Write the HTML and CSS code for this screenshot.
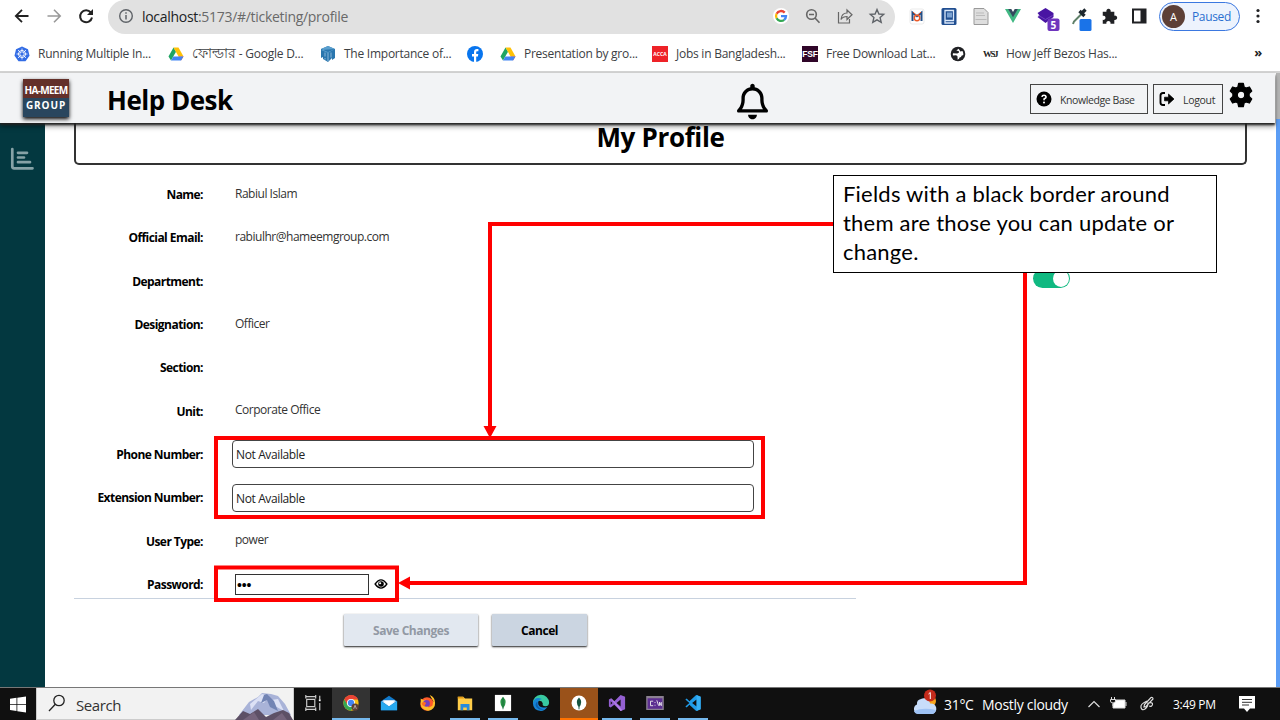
FILE: index.html
```html
<!DOCTYPE html>
<html lang="en">
<head>
<meta charset="utf-8">
<title>Help Desk - My Profile</title>
<link rel="stylesheet" href="styles.css">
</head>
<body>
<svg width="0" height="0" class="defs">
  <defs>
    <symbol id="drive" viewBox="0 0 16 16"><path fill="#1fa463" d="M5.5 1.5 0.5 10.5 3 14.5 8 5.7z"/><path fill="#ffc107" d="M5.500 1.500h5l5 9h-5z"/><path fill="#ea4335" d="M13 14.500l2.500-4h-5z"/><path fill="#4285f4" d="M3 14.500 5.400 10.500h10.100L13 14.500z"/></symbol>
  </defs>
</svg>

<div class="toolbar">
  <svg class="nav" viewBox="0 0 32 32"><path d="M22.500 16H10M16 9.800 9.800 16l6.200 6.200" fill="none" stroke="#222" stroke-width="1.800"/></svg>
  <svg class="nav" viewBox="0 0 32 32"><path d="M9.500 16H22M16 9.800 22.200 16 16 22.200" fill="none" stroke="#999" stroke-width="1.600"/></svg>
  <svg class="nav" viewBox="0 0 32 32"><path d="M20.800 12.500A6 6 0 1 0 22 17.500" fill="none" stroke="#222" stroke-width="2"/><path d="M23 9v6h-6z" fill="#222"/></svg>
  <div class="address">
    <svg width="16" height="16" viewBox="0 0 16 16"><circle cx="8" cy="8" r="6.300" fill="none" stroke="#5f6368" stroke-width="1.400"/><path d="M8 7v4.500M8 4.300v1.500" stroke="#5f6368" stroke-width="1.500"/></svg>
    <div class="url"><b>localhost</b>:5173/#/ticketing/profile</div>
    <div class="address-icons">
      <svg class="slot" viewBox="0 0 32 32"><circle cx="16" cy="16" r="8" fill="#fff"/><g fill="none" stroke-width="2.300"><path d="M19.700 12.600A5 5 0 0 0 11.600 13.700" stroke="#ea4335"/><path d="M11.600 13.700A5 5 0 0 0 11.600 18.300" stroke="#fbbc05"/><path d="M11.600 18.300A5 5 0 0 0 19.200 19.800" stroke="#34a853"/><path d="M19.200 19.800A5 5 0 0 0 21 16.100H16" stroke="#4285f4"/></g></svg>
      <svg class="slot" viewBox="0 0 32 32" fill="none" stroke="#666" stroke-width="1.600"><circle cx="14.500" cy="14.500" r="4.800"/><path d="M18 18l4.500 4.800M12 14.500h5"/></svg>
      <svg class="slot" viewBox="0 0 32 32" fill="none" stroke="#666" stroke-width="1.200"><path d="M9.500 12v11h11v-4"/><path d="M12 19.500c.5-5 3-6.500 6-6.500v-3l5 4.800-5 4.700v-3c-3 0-4.500.5-6 3z"/></svg>
      <svg class="slot" viewBox="0 0 32 32" fill="none" stroke="#5f6368" stroke-width="1.400"><path d="M16 9.500l1.900 4.500 4.800.4-3.600 3.200 1.100 4.700-4.200-2.500-4.200 2.500 1.100-4.700-3.600-3.200 4.800-.4z"/></svg>
    </div>
  </div>
  <div class="extensions">
    <svg class="slot" viewBox="0 0 32 32"><rect x="9" y="9" width="14" height="15" rx="2" fill="#fff" stroke="#ddd" stroke-width=".6"/><path d="M11.500 21v-8.500l4.500 3.700 4.500-3.700V21" fill="none" stroke="#244f86" stroke-width="2"/><circle cx="16" cy="18" r="2.700" fill="none" stroke="#eb5b2a" stroke-width="1.400"/><path d="M12 12l4 4 4-4" fill="none" stroke="#eb5b2a"/></svg>
    <svg class="slot" viewBox="0 0 32 32"><rect x="8.500" y="8" width="15" height="17" rx="1.500" fill="#204e90"/><path d="M12 10.500h8.500v10H12zM12 10v13h9" fill="none" stroke="#dce9fa" stroke-width="1.300"/><rect x="14" y="12.500" width="5" height="5" fill="#7ba2d2"/></svg>
    <svg class="slot" viewBox="0 0 32 32"><path d="M9 8.500h10l4 4v12H9z" fill="#dedede" stroke="#999"/><path d="M11 13h8M11 15.500h9M10.500 19.500h11" stroke="#bbb"/></svg>
    <svg class="slot" viewBox="0 0 32 32"><path d="M8 9h4l4 7 4-7h4l-8 14z" fill="#41b883"/><path d="M11.200 9h3.100l1.700 3 1.700-3h3.100L16 17.300z" fill="#35495e"/></svg>
    <svg class="slot blazor" viewBox="0 0 34 32"><path d="M16 8l8 5v4l-8 6-8-6 2-1.500L8 13z" fill="#4915a3"/><path d="M9 15.500l7 4 7-4" fill="none" stroke="#8a65cf" stroke-width=".6"/><rect x="18" y="18.500" width="12" height="12.500" rx="2" fill="#6f35be"/><text x="21" y="28.500" font-size="10" font-weight="700" fill="#fff">5</text></svg>
    <svg class="slot" viewBox="0 0 32 32"><path d="M18.500 13 10 21.500 9 24" fill="none" stroke="#5f8068" stroke-width="2"/><path d="M15.500 11l5 5M18 13l3.500-3.500" stroke="#1e2830" stroke-width="3.300"/><rect x="15.500" y="19" width="12" height="12" rx="1.500" fill="#1a73e8"/></svg>
    <svg class="slot puzzle" viewBox="0 0 28 32"><path d="M7 11.500h3.800a2.300 2.300 0 1 1 4.400 0H19v4.200a2.300 2.300 0 1 1 0 4.400V24h-4a2.200 2.200 0 1 0-4.200 0H7v-4a2.200 2.200 0 1 0 0-4.200z" fill="#202124"/></svg>
    <svg class="slot" viewBox="0 0 32 32"><rect x="10" y="9.500" width="12.500" height="13" fill="none" stroke="#202124" stroke-width="2"/><rect x="17.500" y="9" width="5.500" height="14" fill="#202124"/></svg>
  </div>
  <div class="account"><span class="avatar">A</span><span class="paused">Paused</span></div>
  <svg class="dots" viewBox="0 0 8 20" fill="#202124"><circle cx="4" cy="4.500" r="1.600"/><circle cx="4" cy="10" r="1.600"/><circle cx="4" cy="15.500" r="1.600"/></svg>
</div>

<div class="bookmarks">
  <div class="bm w154"><svg viewBox="0 0 16 16"><path d="M8 .5l6 2.800 1.500 6.500-4 5.500h-7l-4-5.500L2 3.300z" fill="#326ce5"/><circle cx="8" cy="8" r="3.500" fill="none" stroke="#fff"/><path d="M8 2.500v11M2.500 8h11M4 4l8 8M12 4l-8 8" stroke="#fff" stroke-width=".8"/><circle cx="8" cy="8" r="1.200" fill="#326ce5"/></svg><span>Running Multiple In...</span></div>
  <div class="bm w152"><svg><use href="#drive"/></svg><span><span class="bn">ফোল্ডার</span> - Google D...</span></div>
  <div class="bm w147"><svg viewBox="0 0 16 16"><path d="M8 0l7 3v9l-3 2v-2l-4 4-5-3v-2l-2 1V3z" fill="#2a76ae"/><path d="M1 4l7 3 7-4M1 3l7-3 7 3-7 3z" fill="#5a9fce"/><path d="M8 7v8M5 6.500v4M11 6.500v5M5 12v1.500" stroke="#b4d6ec" stroke-width=".7"/></svg><span>The Importance of...</span></div>
  <div class="bm w33"><svg viewBox="0 0 16 16"><circle cx="8" cy="8" r="8" fill="#0875ee"/><path d="M7 16v-5.500H5V8h2V6.200C7 4 8.200 3 10 3h1.400v2.200h-1C9.400 5.200 9.200 5.700 9.200 6.400V8h2.100l-.4 2.500H9.200V16z" fill="#fff"/></svg></div>
  <div class="bm w152"><svg><use href="#drive"/></svg><span>Presentation by gro...</span></div>
  <div class="bm w150"><b class="acca">ACCA</b><span>Jobs in Bangladesh...</span></div>
  <div class="bm w148"><b class="fsf">FSF</b><span>Free Download Lat...</span></div>
  <div class="bm w32"><svg viewBox="0 0 16 16"><circle cx="8" cy="8" r="7.300" fill="#202124"/><path d="M8.500 2.800Q6.500 4 6.500 5q2-.5 2.500.8T7.200 7.500L3 7.200Q2.600 8.500 3 9.500L6 9.200Q8 9.500 7.600 12v1.800Q9.500 13 9.500 11.500q2 0 2-1.800L13.300 9Q13.600 6.800 12.500 5L10.300 5.500 9.500 4z" fill="#fff"/></svg></div>
  <div class="bm"><b class="wsj">WSJ</b><span>How Jeff Bezos Has...</span></div>
  <span class="more">»</span>
</div>

<div class="page">
  <header class="app-header">
    <div class="logo"><span>HA-MEEM</span><span class="group">GROUP</span></div>
    <h1>Help Desk</h1>
    <svg class="bell" viewBox="0 0 448 512"><path d="M224 0c-17.700 0-32 14.300-32 32V51.200C119 66 64 130.600 64 208v25.400c0 45.400-15.500 89.500-43.800 124.900L5.300 377c-5.800 7.200-6.900 17.100-2.900 25.400S14.800 416 24 416H424c9.200 0 17.600-5.300 21.600-13.600s2.900-18.200-2.900-25.400l-14.900-18.600C399.500 322.900 384 278.800 384 233.400V208c0-77.400-55-142-128-156.800V32c0-17.700-14.300-32-32-32zm0 96c61.900 0 112 50.100 112 112v25.400c0 47.900 13.900 94.600 39.700 134.600H72.300C98.100 328 112 281.300 112 233.400V208c0-61.900 50.100-112 112-112zm64 352H160c0 17 6.700 33.300 18.700 45.300s28.300 18.700 45.300 18.700 33.300-6.700 45.300-18.700S288 465 288 448z"/></svg>
    <div class="actions">
      <div class="hbtn kb"><svg viewBox="0 0 16 16"><circle cx="8" cy="8" r="7.500"/><path d="M5.900 5.900Q6.200 4.300 8 4.300T10.100 6Q10.100 7 8.100 8V9.200" fill="none" stroke="#fff" stroke-width="1.600"/><circle cx="8" cy="11.500" r="1" fill="#fff"/></svg><span>Knowledge Base</span></div>
      <div class="hbtn lo"><svg viewBox="0 0 16 16"><path d="M6 2H4Q1.500 2 1.500 4.500v7Q1.500 14 4 14H6" fill="none" stroke="#000" stroke-width="1.900"/><path d="M5.500 6.200H9.500V3L15 8l-5.500 5V9.800H5.500z" stroke="#000" stroke-width=".7" stroke-linejoin="round"/></svg><span>Logout</span></div>
      <svg class="gear" viewBox="0 0 24 26"><path fill-rule="evenodd" d="M9.700 1.500h4.600l.8 3.500 1.900 1.100 3.400-1.100 2.300 4-2.600 2.600v2.800l2.600 2.600-2.300 4-3.400-1.100-1.900 1.100-.8 3.500H9.700L8.900 21 7 19.900 3.600 21l-2.300-4 2.600-2.600v-2.800L1.300 9l2.300-4L7 6.100 8.900 5zM12 9.200a3.800 3.800 0 1 0 0 7.600 3.800 3.800 0 0 0 0-7.600z" stroke="#000" stroke-width="1.300" stroke-linejoin="round"/></svg>
    </div>
  </header>

  <div class="body">
    <nav class="sidebar"><svg viewBox="0 0 24 24" fill="none" stroke="#86a2a6" stroke-width="2.700" stroke-linecap="round" stroke-linejoin="round"><path d="M2.300 2v17.500q0 1.800 1.800 1.800H22.500M8 5.800h9M8 10.500h6M8 15.200h12"/></svg></nav>
    <main class="content">
      <h2>My Profile</h2>
      <div class="columns">
        <section class="form">
          <div class="row"><label>Name:</label><span>Rabiul Islam</span></div>
          <div class="row"><label>Official Email:</label><span>rabiulhr@hameemgroup.com</span></div>
          <div class="row"><label>Department:</label></div>
          <div class="row"><label>Designation:</label><span>Officer</span></div>
          <div class="row"><label>Section:</label></div>
          <div class="row"><label>Unit:</label><span>Corporate Office</span></div>
          <div class="row"><label>Phone Number:</label><div class="input">Not Available</div></div>
          <div class="row"><label>Extension Number:</label><div class="input">Not Available</div></div>
          <div class="row"><label>User Type:</label><span>power</span></div>
          <div class="row"><label>Password:</label><div class="password">•••</div><svg class="eye" viewBox="0 0 18 14"><path d="M1.500 7Q9-3.500 16.500 7 9 17.500 1.500 7z" fill="none" stroke="#000" stroke-width="1.800"/><circle cx="9" cy="7" r="3.600"/><circle cx="7.900" cy="6" r="1.400" fill="#fff"/></svg></div>
        </section>
        <div class="toggle"><i></i></div>
      </div>
      <div class="buttons"><div class="btn save">Save Changes</div><div class="btn cancel">Cancel</div></div>
    </main>
  </div>
  <div class="scrollbar"></div>
</div>

<div class="taskbar">
  <div class="start"><svg viewBox="0 0 16 16" fill="#fff"><path d="M0 2.300 6.500 1.300V7.500H0zM7.300 1.200 16 0v7.500H7.300zM0 8.300h6.500v6.200L0 13.600zM7.300 8.300H16V16L7.300 14.700z"/></svg></div>
  <div class="search"><svg class="lens" viewBox="0 0 18 18" fill="none" stroke="#222" stroke-width="1.300"><circle cx="11" cy="6.500" r="5.200"/><path d="M7.300 10.300 1 17"/></svg><span>Search</span>
    <svg class="mountain" viewBox="0 0 58 28"><path d="M4 23 14 10 23 5 27 1 36 2 43 4 50 12 56 23z" fill="#a9b3d8"/><path d="M15 12 27 2l7 2-5 7-6-2-7 9zM36 8l7-1 6 12-9-5z" fill="#dce1f5"/><path d="M29 3l-3 8 6-3 3 7 8 4-4-10-7-7z" fill="#7284b4"/><path d="M0 28 8 19l7 3 8-5 8 8 8-4 9-3 6 3 4 7z" fill="#5d5066"/><path d="M8 28l11-8 5 8zM38 28l9-7 5 7z" fill="#75647c"/></svg></div>
  <div class="apps">
    <div><svg viewBox="0 0 20 20" fill="none" stroke="#ccc" stroke-width="1.300"><path d="M2 3h11M2 17h11M3 6h9v8H3zM2 1v4M13 1v4M2 15v4M13 15v4M17.500 2v4M17.500 10v8"/><path d="M16.500 7h2" stroke="#fff" stroke-width="2"/></svg></div>
    <div class="active run"><svg viewBox="0 0 20 20"><circle cx="10" cy="10" r="8.500" fill="#fbc116"/><path d="M2.500 6A8.500 8.500 0 0 1 18 6H10L6 12z" fill="#ea4335"/><path d="M2.600 6A8.500 8.500 0 0 0 10 18.500L13 12 6 12z" fill="#34a853"/><circle cx="10" cy="10" r="4.500" fill="#fff"/><circle cx="10" cy="10" r="3.500" fill="#4285f4"/><circle cx="14.500" cy="14.500" r="4" fill="#5d4037"/><path d="M13 16.500l1.500-4 1.500 4" fill="none" stroke="#ddd" stroke-width=".7"/></svg></div>
    <div><svg viewBox="0 0 20 20"><path d="M1 8l9-6 9 6v10H1z" fill="#1279c9"/><path d="M2 8h16L10 14z" fill="#e7f6ff"/><path d="M1 8l9 6 9-6v10H1z" fill="#27a9ef"/><path d="M3 7h14l-7 6z" fill="#fff"/></svg></div>
    <div><svg viewBox="0 0 20 20"><circle cx="10" cy="11" r="7.500" fill="#ff5a2b"/><path d="M3 5l3 2 3-1-2 4 5 5 4-2 1-5-4-7q6 2 6 9a8 8 0 0 1-16 1z" fill="#ffbd28"/><circle cx="9.500" cy="10.500" r="3.700" fill="#7640bc"/><path d="M4 10q3-2 5 0l-2 4q-3-1-3-4z" fill="#ff6d23"/></svg></div>
    <div class="run"><svg viewBox="0 0 20 20"><path d="M2 3h6l2 2h8v13H2z" fill="#ffcd49"/><path d="M2 3h6l1 2H2z" fill="#e39a17"/><path d="M5 18v-7h10v7h-3v-3H8v3z" fill="#278bdc"/></svg></div>
    <div class="run"><svg viewBox="0 0 20 20"><path d="M1 1h18v18H1z" fill="#fff"/><path d="M10 3q6 6 0 13-6-7 0-13z" fill="#299446"/><path d="M10 4v13" stroke="#15663a" stroke-width=".8"/></svg></div>
    <div><svg viewBox="0 0 20 20"><path d="M1 10A9 9 0 0 1 19 9.500Q19 13.500 15 13.500q-4 0-3-3Q11 5 1 10z" fill="#38c9a0"/><path d="M1 10Q3 2 11 5.500q-5 1-4 6 2 5 10 3-3 4.500-7 4.500Q1 18 1 10z" fill="#1684d4"/><path d="M6 9q-1 8 8 8-7 2-10-4 0-4 2-4z" fill="#0c5eab"/></svg></div>
    <div class="alert"><svg viewBox="0 0 20 20"><circle cx="10" cy="10" r="8.300" fill="#fff"/><path d="M10 4q5 5 0 11-5-6 0-11z" fill="#15543f"/><path d="M10 14v3" stroke="#15543f"/></svg></div>
    <div class="run"><svg viewBox="0 0 20 20"><path d="M14 1l5 2v14l-5 2L7 12l-4 3-2-1V6l2-1 4 3zM14 6l-4.500 4 4.500 4zM3 8v4l2-2z" fill="#9460d2" fill-rule="evenodd"/><path d="M3 5l11 14 2-1L4 5z" fill="#b582ea"/></svg></div>
    <div class="run"><svg viewBox="0 0 20 20"><path d="M1 3h18v14H1z" fill="#5c2e91"/><path d="M1 3h18v14H1zM1 4h18" fill="none" stroke="#8b8191" stroke-width="1.500"/><path d="M8 8H5v5h3M10 9v1M10 12v1M12 7l2 6M15 13V9l2 4V9" fill="none" stroke="#eee" stroke-width="1"/></svg></div>
    <div class="run"><svg viewBox="0 0 20 20"><path d="M13.500 1 18.500 3v14l-5 2L6 12l-3 3-1.500-1L6 10 1.500 6 3 5l3 3zM14 6l-5 4 5 4z" fill="#209be8" fill-rule="evenodd"/><path d="M14 1l4.500 2v14L14 19z" fill="#36aff4"/></svg></div>
  </div>
  <div class="tray">
    <svg class="weather" viewBox="0 0 26 26"><circle cx="18" cy="12" r="6" fill="#f7a51d"/><path d="M6 25a5 5 0 0 1-1-9.500 5 5 0 0 1 4-5.500 6 6 0 0 1 9 4.500A5.300 5.300 0 0 1 20 25z" fill="#c8ddfa"/><path d="M2 22q9-4 22-1-1 4-4 4H6q-3 0-4-3z" fill="#9ec2f4"/><circle cx="18" cy="6.500" r="6" fill="#c42b1c"/><path d="M16.500 5 18.300 3.500V10" fill="none" stroke="#fff"/></svg>
    <span class="temp">31°C</span><span class="cond">Mostly cloudy</span>
    <svg class="chev" viewBox="0 0 12 8" fill="none" stroke="#ddd" stroke-width="1.200"><path d="M.5 7 6 1.500 11.500 7"/></svg>
    <svg class="battery" viewBox="0 0 17 14"><path d="M5 4h10v8H3V8" fill="#fff" stroke="#ddd"/><path d="M15.500 6h1v4h-1" fill="#ddd"/><path d="M1.500 1v3M4.500 1v3M.5 3.500h5V5q0 2-2.500 2T.5 5zM3 7v3" fill="#101010" stroke="#ddd"/></svg>
    <svg class="pen" viewBox="0 0 16 16" fill="none" stroke="#ddd" stroke-width="1.200"><path d="M5.500 8.500 12 1.500q2-.5 2 1.500L7 10.500l-2 .5zM8 5Q1 8 2 11.500T6 13t3-6q5-1 4.500 1.500T10 10"/></svg>
    <span class="time">3:49 PM</span>
    <svg class="note" viewBox="0 0 18 18"><path d="M1 1h16v12.500h-5L9 17l-3-3.500H1z" fill="#fff"/><path d="M4 4.500h10M4 7.300h10M4 10h7" stroke="#333"/></svg>
  </div>
</div>

<svg class="annotations" viewBox="0 0 1280 720" fill="none" stroke="#f00">
  <path d="M834 224H490V427M1025 272V583H408" stroke-width="4"/>
  <path d="M483.500 426h13L490 438zM410 576.500v13L398 583z" fill="#f00" stroke="none"/>
  <path d="M216 438h547v79H216zM216 567.500h181V600H216z" stroke-width="4"/>
</svg>
<div class="callout"><span>Fields with a black border around</span><span>them are those you can update or</span><span>change.</span></div>
</body>
</html>
```
FILE: styles.css
```css
* { box-sizing: border-box; }
body { margin: 0; width: 1280px; height: 720px; overflow: hidden; display: flex; flex-direction: column; background: #fff; color: #000; font-family: "Open Sans", "Noto Sans", sans-serif; position: relative; }
svg { flex: none; display: block; }
.defs { position: absolute; }
span, label, .url { white-space: nowrap; }

.toolbar { height: 34px; display: flex; align-items: center; padding: 0 0 2px 6px; }
.nav { width: 32px; height: 32px; }
.address { width: 787px; height: 34px; margin: 2px 0 0 6px; background: #e1e1e1; border-radius: 17px; display: flex; align-items: center; padding: 0 2px 2px 10px; }
.url { margin-left: 8px; font-size: 14px; letter-spacing: -.3px; color: #696969; }
.url b { font-weight: 400; color: #202124; }
.address-icons { display: flex; margin-left: auto; }
.slot { width: 32px; height: 32px; }
.extensions { display: flex; padding-left: 6px; }
.blazor { width: 35px; }
.puzzle { width: 27px; }
.account { width: 81px; height: 29px; margin-left: 4px; border: 1.5px solid #3b78e0; border-radius: 15px; background: #edf3fd; display: flex; align-items: center; padding-left: 2px; }
.avatar { width: 23px; height: 23px; border-radius: 50%; background: #5d4037; color: #fff; font-size: 11px; line-height: 23px; text-align: center; }
.paused { margin-left: 7px; font-size: 12px; letter-spacing: -.35px; color: #2a6fd0; }
.dots { width: 8px; height: 20px; margin-left: 14px; }

.bookmarks { height: 39px; border-bottom: 2px solid #d3d3d3; display: flex; align-items: center; padding: 2px 18px 0 14px; font-size: 12px; letter-spacing: -.25px; color: #3c4043; }
.bm { display: flex; align-items: center; gap: 8px; height: 20px; }
.bm svg, .bm b { width: 16px; height: 16px; flex: none; }
.bm b { text-align: center; line-height: 16px; color: #fff; letter-spacing: 0; }
.bn { font-size: 13.5px; letter-spacing: 0; line-height: 14px; }
.w154 { width: 154px; } .w152 { width: 152px; } .w147 { width: 147px; } .w33 { width: 33px; }
.w150 { width: 150px; } .w148 { width: 148px; } .w32 { width: 32px; }
.bm .acca { background: #ee2228; font-size: 5px; }
.bm .fsf { background: #300629; font: 700 8.5px/16px "Liberation Sans", sans-serif; letter-spacing: -.2px; }
.bm .wsj { color: #222; font: 700 9px/16px "Liberation Serif", serif; letter-spacing: -1.5px; }
.more { margin: -3px 0 0 auto; font-size: 13px; font-weight: 700; color: #222; }

.page { height: 614px; position: relative; display: flex; flex-direction: column; }
.app-header { width: 1275px; height: 50px; flex: none; position: relative; z-index: 1; background: #f2f3f5; display: flex; align-items: center; padding-left: 23px; box-shadow: 0 2px 2px #222, 0 4px 5px rgba(0,0,0,.35); }
.logo { width: 46px; height: 38px; margin-bottom: 1px; background: linear-gradient(#63302a 50%, #29465e 50%); box-shadow: 0 2px 4px #000; color: #fff; font-size: 10px; font-weight: 700; line-height: 15px; text-align: center; display: flex; flex-direction: column; padding-top: 4px; letter-spacing: -.7px; }
.logo .group { letter-spacing: .9px; }
h1 { width: 630px; margin: 3px 0 0 38px; font-size: 26px; line-height: 34px; letter-spacing: -.5px; font-weight: 700; }
.bell { width: 31px; height: 37px; margin-top: 6px; }
.actions { display: flex; margin-left: auto; padding-right: 22px; }
.hbtn { height: 30px; margin-top: 1px; border: 1px solid #444; display: flex; align-items: center; padding-left: 5px; font-size: 10.5px; color: #333; }
.hbtn span { margin-top: 2px; }
.hbtn svg { width: 16px; height: 16px; }
.kb { width: 118px; gap: 8px; letter-spacing: -.4px; }
.lo { width: 70px; margin-left: 5px; gap: 8px; letter-spacing: -.3px; }
.gear { width: 24px; height: 26px; margin: -1px 0 0 6px; }

.body { display: flex; height: 564px; }
.sidebar { width: 45px; background: #033840; padding: 24px 0 0 10px; }
.sidebar svg { width: 24px; height: 24px; }
.content { width: 1202px; padding-left: 29px; }
h2 { height: 42px; margin: 0; border: 2px solid #333; border-top: 0; border-radius: 0 0 5px 5px; text-align: center; font-size: 26px; line-height: 29px; letter-spacing: -.35px; font-weight: 700; }
.columns { display: flex; height: 434px; padding-top: 8px; }
.form { width: 782px; height: 426px; border-bottom: 1.5px solid #c8d2df; }
.row { height: 43.3px; display: flex; align-items: center; font-size: 12px; }
.row label { width: 129px; text-align: right; font-weight: 700; letter-spacing: -.55px; }
.row span { margin: -3px 0 0 32px; letter-spacing: -.48px; color: #333; }
.input { width: 522px; height: 28px; margin-left: 29px; border: 1px solid #444; border-radius: 4px; padding-left: 3px; line-height: 28px; letter-spacing: -.38px; color: #222; }
.password { width: 134px; height: 21px; margin-left: 32px; border: 1px solid #333; line-height: 19px; padding-left: 1px; font: 14px/20px "Liberation Sans", sans-serif; letter-spacing: -.2px; }
.eye { width: 14px; height: 12px; margin-left: 5px; }
.toggle { width: 37px; height: 19px; margin: 96px 0 0 177px; border-radius: 10px; background: #10b981; padding: 1px; display: flex; justify-content: flex-end; }
.toggle i { width: 16px; height: 17px; border-radius: 50%; background: #fff; }
.buttons { display: flex; gap: 14px; padding: 15px 0 0 270px; }
.btn { height: 32px; border-radius: 1px; box-shadow: 0 1px 2px #222; text-align: center; line-height: 34px; font-size: 12px; font-weight: 700; letter-spacing: -.45px; }
.save { width: 134px; background: #e2e8f0; color: #9299a4; }
.cancel { width: 95px; background: #cbd5e1; }
.scrollbar { position: absolute; right: 0; top: 0; width: 4px; height: 614px; background: linear-gradient(#b5b5b5 46px, #5b9df5 46px); }

.taskbar { height: 33px; background: #101010; border-top: 1px solid #777; display: flex; color: #fff; }
.start { width: 36px; padding: 8px 0 0 10px; }
.start svg { width: 16px; height: 17px; }
.search { width: 258px; background: #f2f2f2; border: 1px solid #ccc; border-top: 0; display: flex; align-items: center; padding-left: 11px; font-size: 15px; letter-spacing: -.4px; color: #333; }
.lens { width: 18px; height: 18px; margin-top: -2px; }
.search span { margin: 2px 0 0 10px; }
.mountain { width: 58px; height: 28px; margin: 4px 0 0 auto; }
.apps { display: flex; }
.apps div { width: 38px; height: 32px; padding: 6px 0 0 10px; }
.apps svg { width: 18px; height: 18px; }
.apps .run { border-bottom: 2px solid #76b9ed; width: 30px; margin: 0 4px; padding-left: 6px; }
.apps .active { width: 38px; margin: 0; padding-left: 10px; background: #333; }
.apps .alert { background: #9a521a; border-bottom: 2px solid #ff7200; }
.tray { flex: 1; display: flex; align-items: center; padding-left: 200px; font-size: 14px; }
.weather { width: 26px; height: 26px; margin-top: -5px; }
.temp { margin: 1px 0 0 6px; width: 38px; letter-spacing: -.3px; }
.cond { margin-top: 1px; width: 106px; letter-spacing: -.3px; }
.chev { width: 12px; height: 8px; }
.battery { width: 17px; height: 14px; margin: -2px 0 0 10px; }
.pen { width: 16px; height: 16px; margin-left: 12px; }
.time { margin-left: 18px; width: 65px; font-size: 12px; letter-spacing: -.3px; }
.note { width: 18px; height: 18px; }

.annotations { position: absolute; left: 0; top: 0; width: 1280px; height: 720px; }
.callout { position: absolute; left: 833px; top: 175px; width: 384px; height: 98px; background: #fff; border: 1px solid #000; padding: 3px 9px; display: flex; flex-direction: column; font-family: Lato, sans-serif; font-size: 22px; line-height: 29px; letter-spacing: .22px; }
```
